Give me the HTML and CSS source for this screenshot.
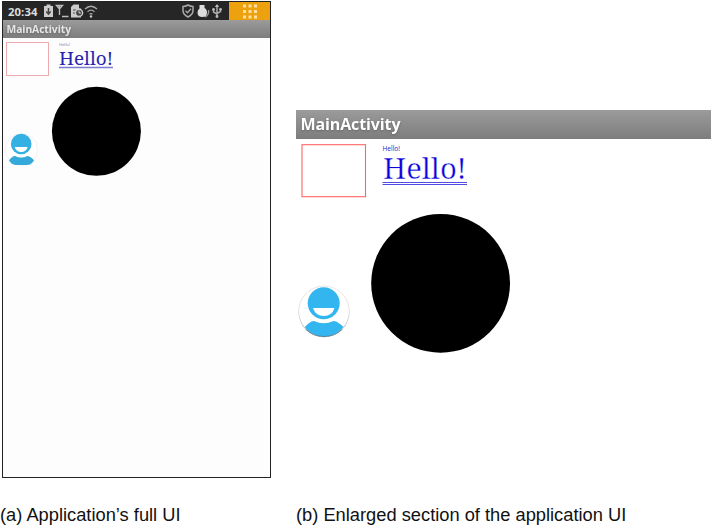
FILE: index.html
```html
<!DOCTYPE html>
<html lang="en">
<head>
<meta charset="utf-8">
<title>MainActivity</title>
<link rel="stylesheet" href="styles.css">
</head>
<body>
<main class="figures">
  <figure class="figure">
    <div class="phone">
      <div class="status">
        <span class="clock">20:34</span>
        <svg class="left-icons" width="56" height="18" viewBox="0 0 56 18">
          <path d="M2 4h2.500V2.500h4V4H11v11H2z" fill="#ccc"/>
          <path d="M6.500 6v6M4.300 9.500l2.200 2.500 2.200-2.500" fill="none" stroke="#444" stroke-width="1.500"/>
          <path d="M14.500 3.500h6l-3 3.500zM17.500 4v9M20 14.500h6.500" fill="none" stroke="#bbb" stroke-width="1.400"/>
          <path d="M29 5l2.500-2.500H37v4h2v9H29z" fill="#ccc"/>
          <path d="M31 8h3M31 11h3" stroke="#444"/>
          <circle cx="37" cy="10.800" r="3.600" fill="#444" stroke="#ccc" stroke-width="1.400"/>
          <path d="M37 8.500v2.500h2" fill="none" stroke="#ccc"/>
          <path d="M43 7q6-5.500 12 0M45.500 9.700q3.500-3 7 0M47.500 12.200q1.500-1.200 3 0" fill="none" stroke="#aaa" stroke-width="1.300"/>
          <circle cx="49" cy="14.500" r="1.200" fill="#ccc"/>
        </svg>
        <svg class="right-icons" width="44" height="18" viewBox="0 0 44 18">
          <path d="M7 3q2.500 1.500 5 1.500v4q0 4-5 6.500-5-2.500-5-6.500v-4Q4.500 4.500 7 3z" fill="none" stroke="#aaa" stroke-width="1.500"/>
          <path d="M4.500 8.700l2 2 3.500-4" fill="none" stroke="#aaa" stroke-width="1.300"/>
          <path d="M18.500 3h5v3q2.500 1 2.500 4.500 0 4.500-4.500 4.500-5 0-5-4.500 0-2.500 2-4z" fill="#ddd"/>
          <path d="M27.500 8q1 5-3.500 7" fill="none" stroke="#999" stroke-width="1.400"/>
          <path d="M36 15V3M32.500 7.500v2.500l3.500 2M39.500 7v2.500L36 11.500" fill="none" stroke="#aaa" stroke-width="1.500"/>
          <path d="M33.800 5L36 2l2.200 3z" fill="#bbb"/>
          <circle cx="32.500" cy="7.500" r="1.400" fill="#bbb"/><circle cx="39.500" cy="7.300" r="1.400" fill="#bbb"/><circle cx="36" cy="14.500" r="1.400" fill="#bbb"/>
        </svg>
        <span class="apps">
          <svg width="16" height="16" viewBox="0 0 16 16" fill="#ffe2a0">
            <path d="M1 1.500h3v3H1zM6.500 1.500h3v3h-3zM12 1.500h3v3h-3zM1 7h3v3H1zM6.500 7h3v3h-3zM12 7h3v3h-3zM1 12.500h3v3H1zM6.500 12.500h3v3h-3zM12 12.500h3v3h-3z"/>
          </svg>
        </span>
      </div>
      <div class="titlebar titlebar-small"><svg width="80" height="18"><text class="title" x="3.500" y="12.500" font-size="10.300" textLength="64.500">MainActivity</text></svg></div>
      <svg class="canvas-small" width="267" height="438" viewBox="3 38 267 438">
        <rect x="6.500" y="42.500" width="42" height="33" fill="#fff" stroke="#eeaaae"/>
        <text class="sans" x="59" y="45.500" font-size="4.200" textLength="11" fill="#7777a8">Hello!</text>
        <text class="serif" x="59" y="64.500" font-size="18.500" textLength="54" lengthAdjust="spacingAndGlyphs" fill="#2a25b0">Hello!</text>
        <path d="M59 67.500h54" stroke="#7d7dd0" stroke-width="1.500"/>
        <circle cx="96.400" cy="131.300" r="44.500"/>
        <circle cx="21.500" cy="149.500" r="16" fill="#fff" stroke="#f1e9e9" stroke-width=".7"/>
        <circle cx="21.200" cy="144" r="10.300" fill="#34b0e2"/>
        <path d="M14.700 147h13q-1.500 5-6.500 5t-6.500-5z" fill="#fff"/>
        <path d="M9 160.500q3-4.500 6-4.500 6.200 3 12.400 0 4 .5 6.600 4.500-3 4.500-7 4.500H15.500Q11.500 164.500 9 160.500z" fill="#34a9da"/>
      </svg>
    </div>
    <figcaption class="caption">(a) Application’s full UI</figcaption>
  </figure>
  <figure class="figure">
    <div class="enlarged">
      <div class="titlebar titlebar-large"><svg width="120" height="29"><text class="title" x="4.500" y="19.500" font-size="16" textLength="100">MainActivity</text></svg></div>
      <svg class="canvas-large" width="415" height="338" viewBox="296 139 415 338">
        <defs><clipPath id="badge"><circle cx="324" cy="311.300" r="25"/></clipPath></defs>
        <rect x="302" y="144.700" width="63.500" height="52" fill="#fff" stroke="#ff6464" stroke-width="1.100"/>
        <text class="sans" x="382.500" y="150.500" font-size="6.700" textLength="17.500" lengthAdjust="spacingAndGlyphs" fill="#2222ba">Hello!</text>
        <text class="serif serif-large" x="383" y="179.300" font-size="28.500" textLength="83.500" lengthAdjust="spacingAndGlyphs" fill="#0900dd">Hello!</text>
        <path d="M382.500 182.500h84.500M382.500 184.500h84.500" stroke="#3c38e0" stroke-width=".9"/>
        <circle cx="440.600" cy="283.300" r="69.400"/>
        <circle cx="324" cy="312" r="25.300" fill="#999"/>
        <circle cx="324" cy="311.300" r="25.300" fill="#fff" stroke="#ddd6d3" stroke-width=".6"/>
        <circle cx="323.700" cy="303.300" r="16" fill="#33b5ef"/>
        <path d="M313 308h21.500q-2.500 8-10.700 8T313 308z" fill="#fff"/>
        <path clip-path="url(#badge)" d="M302 330.500q7-9.500 12-9.500 9.700 4.500 19.500 0 5 0 13.500 9.500v9h-45z" fill="#33b5ef"/>
        <path d="M306 329.500q8 7 18 7t18-7" fill="none" stroke="#477f9a" stroke-width=".9"/>
      </svg>
    </div>
    <figcaption class="caption">(b) Enlarged section of the application UI</figcaption>
  </figure>
</main>
</body>
</html>
```

FILE: styles.css
```css
body {
  margin: 0;
  background: #fff;
  overflow: hidden;
}

.figures {
  display: grid;
  grid-template-columns: 296px 417px;
  height: 527px;
}

.figure {
  display: flex;
  flex-direction: column;
  margin: 0;
}

.phone {
  box-sizing: border-box;
  width: 269px;
  height: 477px;
  margin: 1px 0 0 2px;
  border: 1px solid #222;
  background: #fdfdfd;
}

.status {
  display: flex;
  align-items: center;
  height: 18px;
  background: #262626;
}

.clock {
  width: 34px;
  padding-left: 5px;
  color: #ddd;
  font: bold 11.3px/19px "Open Sans", sans-serif;
  letter-spacing: 0.1px;
}

.right-icons {
  margin-left: auto;
  margin-right: 4px;
}

.apps {
  display: flex;
  justify-content: center;
  align-items: center;
  width: 41px;
  height: 18px;
  background: #eda10f;
}

.titlebar {
  display: flex;
  background: linear-gradient(#9b9b9b, #7d7d7d);
}

.titlebar-small {
  height: 18px;
}

.titlebar-large {
  height: 29px;
}

.title {
  fill: #fff;
  font-family: "Open Sans", "Noto Sans", sans-serif;
  font-weight: bold;
  filter: drop-shadow(0 1px 1px #666);
}

.titlebar-small .title {
  fill: #e6e6e6;
}

.sans {
  font-family: "Open Sans", sans-serif;
}

.serif {
  font-family: "Noto Serif", "Droid Serif", "DejaVu Serif", serif;
}

.serif-large {
  stroke: #fff;
  stroke-width: 0.4px;
}

.canvas-small,
.canvas-large {
  display: block;
}

.enlarged {
  width: 415px;
  height: 368px;
  padding-top: 110px;
}

.caption {
  padding-top: 25px;
  color: #111;
  font: 18.3px/24px "Liberation Sans", Arial, sans-serif;
  white-space: nowrap;
}
```
